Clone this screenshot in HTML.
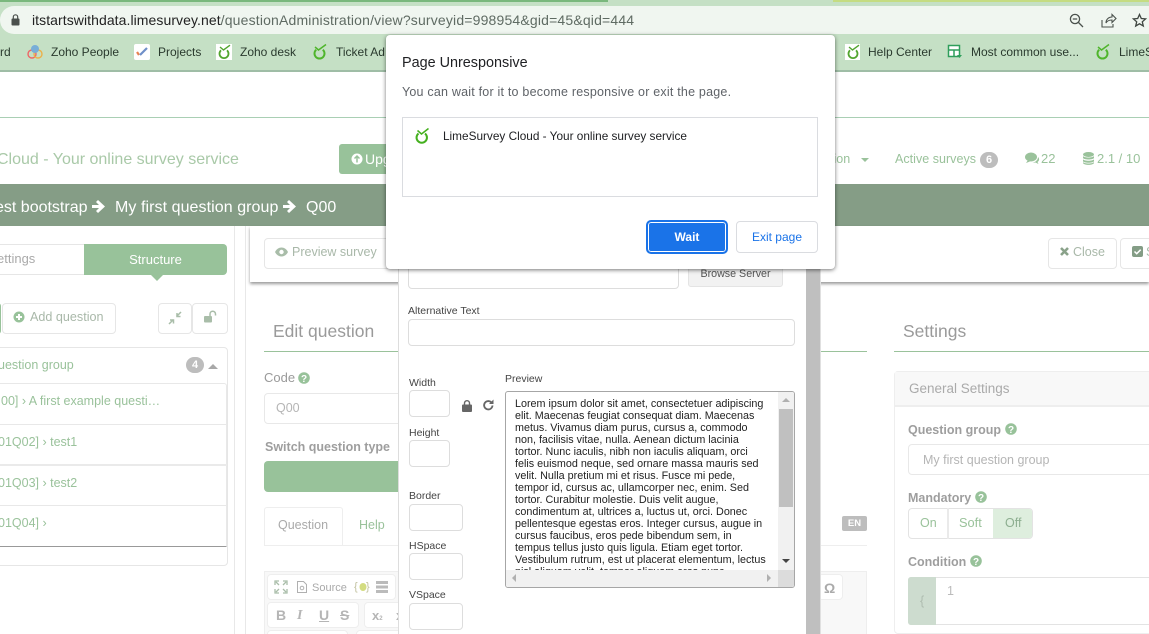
<!DOCTYPE html>
<html><head><meta charset="utf-8"><style>
html,body{margin:0;padding:0;width:1149px;height:634px;overflow:hidden;background:#fff}
body{position:relative;font-family:"Liberation Sans",sans-serif;color:#333}
.a{position:absolute;white-space:nowrap;box-sizing:border-box}
.bm{font-size:12px;color:#2a3a2e;top:44px;line-height:16px}
.g{color:#9ac29b}.gy{color:#a3a3a3}
.b{border:1px solid #e6e6e6;border-radius:4px;background:#fff}
.i{border:1px solid #ddd;border-radius:4px;background:#fff}
.l{font-size:10.5px;color:#444;line-height:13px}
svg{position:absolute;overflow:visible}
</style></head><body>
<!-- chrome -->
<div class="a" style="left:0;top:0;width:1149px;height:71px;background:#c5e0c5"></div>
<div class="a" style="left:0;top:0;width:608px;height:2px;background:#7ab87d"></div>
<div class="a" style="left:833px;top:0;width:316px;height:2px;background:#c5dc82"></div>
<div class="a" style="left:0;top:6px;width:1149px;height:28px;background:#f0f6f0;border-radius:14px 0 0 14px"></div>
<div class="a" style="left:0;top:70px;width:1149px;height:1.5px;background:#9fbda6"></div>
<svg style="left:11px;top:14px" width="11" height="13"><rect x="0.5" y="4.5" width="8" height="7" rx="1" fill="#4a504c"/><path d="M2.3 5V3a2.2 2.2 0 0 1 4.4 0v2" fill="none" stroke="#4a504c" stroke-width="1.2"/></svg>
<div class="a" style="left:32px;top:12px;font-size:14px;line-height:16px;color:#222;letter-spacing:.07px">itstartswithdata.limesurvey.net<span style="color:#5f6b63;letter-spacing:.17px">/questionAdministration/view?surveyid=998954&amp;gid=45&amp;qid=444</span></div>
<svg style="left:1069px;top:13px" width="16" height="16" fill="none" stroke="#4b524d" stroke-width="1.3"><circle cx="6" cy="6" r="4.6"/><path d="M9.5 9.5L14 14M3.8 6h4.4"/></svg>
<svg style="left:1101px;top:13px" width="16" height="16" fill="none" stroke="#4b524d" stroke-width="1.1"><path d="M1 7v7h11v-3M5 10c0-4 3-6 6-6V1.5l4 4-4 4V7c-3 0-5 1-6 3z"/></svg>
<svg style="left:1132px;top:13px" width="15" height="15" fill="none" stroke="#3f4641" stroke-width="1.3"><path d="M7.5 1.5l1.8 4 4.3.4-3.3 2.9 1 4.2-3.8-2.2-3.8 2.2 1-4.2L1.4 5.900l4.300-.4z"/></svg>
<!-- bookmarks -->
<div class="a bm" style="left:0">rd</div>
<svg style="left:27px;top:44px" width="16" height="16"><circle cx="5" cy="10" r="4" fill="none" stroke="#e66" stroke-width="1.4"/><circle cx="11" cy="10" r="4" fill="none" stroke="#ecb14a" stroke-width="1.4"/><circle cx="8" cy="5" r="4" fill="#78aed8"/></svg>
<div class="a bm" style="left:51px">Zoho People</div>
<div class="a" style="left:134px;top:44px;width:16px;height:16px;background:#fff;border-radius:2px"></div>
<svg style="left:134px;top:44px" width="16" height="16" fill="none" stroke-width="2.200"><path d="M3 8l2 3" stroke="#e8834f"/><path d="M6 11l7-7" stroke="#6f8fc8"/></svg>
<div class="a bm" style="left:158px">Projects</div>
<div class="a" style="left:216px;top:44px;width:16px;height:16px;background:#fff"></div>
<svg style="left:216px;top:44px" width="16" height="16" fill="none" stroke="#52a52f" stroke-width="1.800"><path d="M5 6.300a4.500 4.500 0 1 0 6 0"/><path d="M4 3l3.500 3L14 1.200" stroke-width="1.400"/></svg>
<div class="a bm" style="left:240px">Zoho desk</div>
<svg style="left:311px;top:44px" width="16" height="16" fill="none" stroke="#4fb52b" stroke-width="2"><path d="M5.200 5.800a5 5 0 1 0 6.600 0"/><path d="M4 3l3.500 3L15 .5" stroke-width="1.500"/></svg>
<div class="a bm" style="left:336px">Ticket Ad</div>
<div class="a" style="left:845px;top:44px;width:15px;height:16px;background:#fff"></div>
<svg style="left:845px;top:44px" width="16" height="16" fill="none" stroke="#52a52f" stroke-width="1.800"><path d="M5 6.300a4.500 4.500 0 1 0 6 0"/><path d="M4 3l3.500 3L14 1.200" stroke-width="1.400"/></svg>
<div class="a bm" style="left:868px">Help Center</div>
<svg style="left:947px;top:44px" width="16" height="16" fill="#fff" stroke="#2f9e5b" stroke-width="1.500"><rect x="1.500" y="1.500" width="11" height="11"/><path d="M1.500 6h11M7 6v6.500"/><path d="M10 11h5l-2.500 3z" fill="#2f9e5b" stroke="none"/></svg>
<div class="a bm" style="left:971px">Most common use...</div>
<svg style="left:1094px;top:44px" width="16" height="16" fill="none" stroke="#4fb52b" stroke-width="2"><path d="M5.200 5.800a5 5 0 1 0 6.600 0"/><path d="M4 3l3.500 3L15 .5" stroke-width="1.500"/></svg>
<div class="a bm" style="left:1119px">LimeS</div>

<!-- page header -->
<div class="a" style="left:0;top:117px;width:1149px;height:1px;background:#a9cfb4"></div>
<div class="a" style="left:-3px;top:150px;font-size:16px;line-height:20px;color:#a9c9a8">Cloud - Your online survey service</div>
<div class="a" style="left:339px;top:144px;width:60px;height:30px;background:#98c29a;border-radius:3px"></div>
<svg style="left:351px;top:153px" width="12" height="12"><circle cx="6" cy="6" r="5.500" fill="#fff"/><path d="M6 9.500V3M3.500 5.500L6 3l2.500 2.500" stroke="#98c29a" stroke-width="1.500" fill="none"/></svg>
<div class="a" style="left:365px;top:151px;font-size:14px;line-height:16px;color:#fff">Upg</div>
<div class="a g" style="left:830px;top:151px;font-size:12.500px;line-height:16px">tion</div>
<div class="a" style="left:861px;top:158px;border:4px solid transparent;border-top-color:#9ac29b;border-bottom:0"></div>
<div class="a g" style="left:895px;top:151px;font-size:12.500px;line-height:16px;letter-spacing:.03px">Active surveys</div>
<div class="a" style="left:980px;top:152px;width:18px;height:16px;border-radius:9px;background:#bdbdbd;color:#fff;font-size:11px;font-weight:bold;line-height:16px;text-align:center">6</div>
<svg style="left:1025px;top:152px" width="15" height="13" fill="#9ac29b"><ellipse cx="6" cy="5" rx="6" ry="4.500"/><path d="M3 8l-2 3 4-1.500zM13 5c2 2 1 4-.5 5l1 2-3-1.500-3 .2c3-.5 5.500-2.700 5.500-5.700z"/></svg>
<div class="a g" style="left:1041px;top:151px;font-size:13px;line-height:16px">22</div>
<svg style="left:1083px;top:152px" width="11" height="13" fill="#9ac29b"><ellipse cx="5.500" cy="2.500" rx="5.500" ry="2.500"/><path d="M0 4c1 2 10 2 11 0v2c-1 2-10 2-11 0zM0 7.200c1 2 10 2 11 0v2c-1 2-10 2-11 0zM0 10c1 2 10 2 11 0v1c-1 2.500-10 2.500-11 0z"/></svg>
<div class="a g" style="left:1097px;top:151px;font-size:13px;line-height:16px">2.1 / 10</div>
<!-- breadcrumb -->
<div class="a" style="left:0;top:184px;width:1149px;height:42px;background:#859d86"></div>
<div class="a" style="left:-5px;top:198px;font-size:16px;line-height:20px;color:#fff">est bootstrap</div>
<svg style="left:92px;top:200px" width="14" height="13" fill="#fff"><path d="M0 5h7L4 2l2-2 7 6.500L6 13l-2-2 3-3H0z"/></svg>
<div class="a" style="left:115px;top:198px;font-size:16px;line-height:20px;color:#fff;letter-spacing:.07px">My first question group</div>
<svg style="left:283px;top:200px" width="14" height="13" fill="#fff"><path d="M0 5h7L4 2l2-2 7 6.500L6 13l-2-2 3-3H0z"/></svg>
<div class="a" style="left:306px;top:198px;font-size:16px;line-height:20px;color:#fff">Q00</div>

<!-- left panel -->
<div class="a" style="left:-5px;top:244px;width:90px;height:31px;border:1px solid #e6e6e6;border-radius:4px 0 0 4px"></div>
<div class="a" style="left:-3px;top:251px;font-size:13px;line-height:16px;color:#aaa">ettings</div>
<div class="a" style="left:84px;top:244px;width:143px;height:31px;background:#98c29a;border-radius:0 4px 4px 0;color:#fff;font-size:13px;line-height:31px;text-align:center">Structure</div>
<div class="a" style="left:151px;top:275px;border:6px solid transparent;border-top-color:#98c29a;border-bottom:0"></div>
<div class="a" style="left:-5px;top:303px;width:6px;height:31px;border:1px solid #98c29a;border-radius:3px"></div>
<div class="a b" style="left:2px;top:303px;width:114px;height:31px"></div>
<svg style="left:13px;top:311px" width="12" height="12"><circle cx="6" cy="6" r="5.500" fill="#98c29a"/><path d="M6 3v6M3 6h6" stroke="#fff" stroke-width="2"/></svg>
<div class="a" style="left:30px;top:309px;font-size:12.600px;line-height:16px;color:#a9b8a9">Add question</div>
<div class="a b" style="left:158px;top:303px;width:34px;height:31px"></div>
<svg style="left:169px;top:312px" width="12" height="12" stroke="#a9bda9" stroke-width="1.500" fill="none"><path d="M12 0L7.500 4.500M8 1v3.500h3.500M0 12l4.500-4.500M1 8h3.500v3.500"/></svg>
<div class="a b" style="left:192px;top:303px;width:36px;height:31px"></div>
<svg style="left:204px;top:311px" width="13" height="12"><rect x="0" y="5" width="8" height="6.500" rx="1" fill="#a9bda9"/><path d="M6 5V3a2.500 2.500 0 0 1 5.500 0v1.500" fill="none" stroke="#a9bda9" stroke-width="1.500"/></svg>
<div class="a b" style="left:-5px;top:347px;width:233px;height:219px"></div>
<div class="a g" style="left:-2px;top:357px;font-size:12.500px;line-height:16px">uestion group</div>
<div class="a" style="left:186px;top:357px;width:18px;height:16px;border-radius:9px;background:#bdbdbd;color:#fff;font-size:11px;font-weight:bold;line-height:16px;text-align:center">4</div>
<div class="a" style="left:208px;top:364px;border:5px solid transparent;border-bottom-color:#a8a8a8;border-top:0"></div>
<div class="a" style="left:-5px;top:383px;width:232px;height:164px;border:1px solid #e8e8e8;border-bottom:1px solid #999;border-radius:3px 3px 0 0"></div>
<div class="a" style="left:0;top:424px;width:227px;height:1px;background:#e8e8e8"></div>
<div class="a" style="left:0;top:464px;width:227px;height:2px;background:#eaeaea"></div>
<div class="a" style="left:0;top:505px;width:227px;height:1px;background:#e8e8e8"></div>
<div class="a g" style="left:1px;top:393px;font-size:12.500px;line-height:16px">00] › A first example questi…</div>
<div class="a g" style="left:-2px;top:434px;font-size:12.500px;line-height:16px">01Q02] › test1</div>
<div class="a g" style="left:-2px;top:475px;font-size:12.500px;line-height:16px">01Q03] › test2</div>
<div class="a g" style="left:-2px;top:515px;font-size:12.500px;line-height:16px">01Q04] ›</div>
<div class="a" style="left:234px;top:226px;width:12px;height:408px;border-left:1px solid #e8e8e8;border-right:1px solid #e8e8e8"></div>

<!-- top bar -->
<div class="a" style="left:250px;top:226px;width:899px;height:56px;background:#fff;box-shadow:0 2px 3px rgba(0,0,0,.4)"></div>
<div class="a b" style="left:264px;top:238px;width:140px;height:31px"></div>
<svg style="left:275px;top:247px" width="13" height="10"><path d="M0 5c3-6 10-6 13 0-3 6-10 6-13 0z" fill="#a9bda9"/><circle cx="6.500" cy="5" r="2.200" fill="#fff"/></svg>
<div class="a" style="left:292px;top:244px;font-size:12.500px;line-height:16px;color:#a9b8a9">Preview survey</div>
<div class="a b" style="left:1048px;top:238px;width:69px;height:31px"></div>
<svg style="left:1060px;top:247px" width="9" height="9" stroke="#8aa28a" stroke-width="2.600"><path d="M1 1l7 7M8 1L1 8"/></svg>
<div class="a" style="left:1073px;top:244px;font-size:12.500px;line-height:16px;color:#a9b8a9">Close</div>
<div class="a b" style="left:1120px;top:238px;width:40px;height:31px"></div>
<svg style="left:1132px;top:246px" width="11" height="11"><rect width="11" height="11" rx="2" fill="#849d86"/><path d="M2.500 5.500l2.200 2.200 4-4" stroke="#fff" stroke-width="1.500" fill="none"/></svg>
<div class="a" style="left:1146px;top:244px;font-size:12.500px;line-height:16px;color:#a9b8a9">S</div>

<!-- edit question -->
<div class="a" style="left:273px;top:321px;font-size:17.500px;line-height:20px;color:#9a9a9a">Edit question</div>
<div class="a" style="left:264px;top:351px;width:603px;height:1px;background:#9ac29b"></div>
<div class="a" style="left:264px;top:370px;font-size:13px;line-height:16px;color:#9a9a9a">Code</div>
<svg style="left:298px;top:372px" width="12" height="12"><circle cx="6" cy="6" r="5.800" fill="#98c29a"/><text x="6" y="9.800" font-size="10" font-weight="bold" fill="#fff" text-anchor="middle" font-family="Liberation Sans">?</text></svg>
<div class="a i" style="left:264px;top:393px;width:140px;height:31px;border-color:#e8e8e8"></div>
<div class="a" style="left:276px;top:400px;font-size:12.500px;line-height:16px;color:#b5b5b5">Q00</div>
<div class="a" style="left:265px;top:439px;font-size:12.500px;font-weight:bold;line-height:16px;color:#9e9e9e">Switch question type</div>
<div class="a" style="left:264px;top:461px;width:140px;height:31px;background:#98c29a;border-radius:4px 0 0 4px"></div>
<div class="a" style="left:264px;top:507px;width:79px;height:39px;border:1px solid #eee;border-bottom:0;border-radius:3px 3px 0 0"></div>
<div class="a" style="left:264px;top:545px;width:603px;height:1px;background:#eee"></div>
<div class="a" style="left:278px;top:517px;font-size:12.500px;line-height:16px;color:#aaa">Question</div>
<div class="a g" style="left:359px;top:517px;font-size:12.500px;line-height:16px">Help</div>
<div class="a" style="left:842px;top:516px;width:25px;height:15px;background:#bdbdbd;border-radius:2px;color:#fff;font-size:9.500px;font-weight:bold;line-height:15px;text-align:center">EN</div>
<!-- editor -->
<div class="a" style="left:264px;top:571px;width:603px;height:63px;background:#f8f8f8;border:1px solid #eee;border-bottom:0"></div>
<div class="a b" style="left:267px;top:574px;width:129px;height:26px;border-color:#eee"></div>
<div class="a b" style="left:267px;top:602px;width:92px;height:26px;border-color:#eee"></div>
<div class="a b" style="left:364px;top:602px;width:40px;height:26px;border-color:#eee"></div>
<div class="a b" style="left:267px;top:630px;width:81px;height:10px;border-color:#eee"></div>
<div class="a b" style="left:356px;top:630px;width:48px;height:10px;border-color:#eee"></div>
<svg style="left:275px;top:581px" width="12" height="12" stroke="#a9bda9" stroke-width="1.300" fill="none"><path d="M0 4V0h4M8 0h4v4M0 8v4h4M12 8v4H8M1 1l3 3M11 1L8 4M1 11l3-3M11 11L8 8"/></svg>
<svg style="left:297px;top:581px" width="10" height="12" stroke="#b0b0b0" fill="none"><path d="M.5.500h6l3 3v8h-9z"/><circle cx="5" cy="7" r="1.800"/></svg>
<div class="a" style="left:312px;top:581px;font-size:11px;line-height:14px;color:#aaa">Source</div>
<div class="a" style="left:354px;top:580px;font-size:11px;line-height:14px;color:#c2c2a0">{</div>
<svg style="left:359px;top:582px" width="8" height="10"><ellipse cx="4" cy="5" rx="3.500" ry="4" fill="#d3dc80"/></svg>
<div class="a" style="left:366px;top:580px;font-size:11px;line-height:14px;color:#c2c2a0">}</div>
<svg style="left:376px;top:581px" width="12" height="12" fill="#bbb"><rect width="12" height="3"/><rect y="4.500" width="12" height="3"/><rect y="9" width="12" height="3"/></svg>
<div class="a" style="left:276px;top:608px;font-size:14px;font-weight:bold;line-height:15px;color:#b5b5b5">B</div>
<div class="a" style="left:297px;top:608px;font-size:14px;font-weight:bold;font-style:italic;line-height:15px;font-family:'Liberation Serif',serif;color:#b5b5b5">I</div>
<div class="a" style="left:319px;top:608px;font-size:14px;font-weight:bold;text-decoration:underline;line-height:15px;color:#b5b5b5">U</div>
<div class="a" style="left:340px;top:608px;font-size:14px;font-weight:bold;text-decoration:line-through;line-height:15px;color:#b5b5b5">S</div>
<div class="a" style="left:372px;top:608px;font-size:13px;font-weight:bold;line-height:15px;color:#b5b5b5">x<span style="font-size:6px">2</span></div>
<div class="a" style="left:396px;top:608px;font-size:13px;font-weight:bold;line-height:15px;color:#b5b5b5">x</div>
<div class="a b" style="left:818px;top:574px;width:25px;height:26px;border-color:#eee"></div>
<div class="a" style="left:824px;top:580px;font-size:14px;line-height:16px;color:#aaa;font-weight:bold">Ω</div>

<!-- settings -->
<div class="a" style="left:903px;top:321px;font-size:17.500px;line-height:20px;color:#9a9a9a">Settings</div>
<div class="a" style="left:894px;top:351px;width:255px;height:1px;background:#9ac29b"></div>
<div class="a" style="left:894px;top:371px;width:265px;height:263px;border:1px solid #eee;border-radius:4px"></div>
<div class="a" style="left:895px;top:372px;width:254px;height:35px;background:#f8f8f8;border-bottom:2px solid #eee"></div>
<div class="a" style="left:909px;top:381px;font-size:13.500px;line-height:16px;color:#aaa">General Settings</div>
<div class="a" style="left:908px;top:422px;font-size:12.500px;font-weight:bold;line-height:16px;color:#9e9e9e">Question group</div>
<svg style="left:1005px;top:423px" width="12" height="12"><circle cx="6" cy="6" r="5.800" fill="#98c29a"/><text x="6" y="9.800" font-size="10" font-weight="bold" fill="#fff" text-anchor="middle" font-family="Liberation Sans">?</text></svg>
<div class="a i" style="left:908px;top:444px;width:250px;height:31px;border-color:#e8e8e8"></div>
<div class="a" style="left:923px;top:452px;font-size:12.500px;line-height:16px;color:#b5b5b5">My first question group</div>
<div class="a" style="left:908px;top:490px;font-size:12.500px;font-weight:bold;line-height:16px;color:#9e9e9e">Mandatory</div>
<svg style="left:975px;top:491px" width="12" height="12"><circle cx="6" cy="6" r="5.800" fill="#98c29a"/><text x="6" y="9.800" font-size="10" font-weight="bold" fill="#fff" text-anchor="middle" font-family="Liberation Sans">?</text></svg>
<div class="a" style="left:908px;top:508px;width:125px;height:31px;border:1px solid #e3e3e3;border-radius:4px"></div>
<div class="a" style="left:947px;top:508px;width:2px;height:31px;background:#eaeaea"></div>
<div class="a" style="left:993px;top:509px;width:39px;height:29px;background:#deeede;border-radius:0 3px 3px 0"></div>
<div class="a g" style="left:920px;top:515px;font-size:12.500px;line-height:16px">On</div>
<div class="a g" style="left:959px;top:515px;font-size:12.800px;line-height:16px">Soft</div>
<div class="a" style="left:1005px;top:515px;font-size:12.500px;line-height:16px;color:#8dae90">Off</div>
<div class="a" style="left:908px;top:554px;font-size:12.500px;font-weight:bold;line-height:16px;color:#9e9e9e">Condition</div>
<svg style="left:970px;top:555px" width="12" height="12"><circle cx="6" cy="6" r="5.800" fill="#98c29a"/><text x="6" y="9.800" font-size="10" font-weight="bold" fill="#fff" text-anchor="middle" font-family="Liberation Sans">?</text></svg>
<div class="a" style="left:908px;top:577px;width:250px;height:48px;border:1px solid #e3e3e3;border-radius:3px"></div>
<div class="a" style="left:908px;top:577px;width:28px;height:48px;background:#cddccf;border-radius:3px 0 0 3px"></div>
<div class="a" style="left:920px;top:593px;font-size:12.500px;line-height:16px;color:#aebcaf">{</div>
<div class="a" style="left:947px;top:583px;font-size:12.500px;line-height:16px;color:#bbb">1</div>

<!-- image dialog behind -->
<div class="a" style="left:398px;top:255px;width:423px;height:379px;background:#fff;border-left:1px solid #ddd"></div>
<div class="a" style="left:806px;top:255px;width:15px;height:379px;background:#bfbfbf;border-right:1px solid #e0e0e0;outline:0"></div>
<div class="a i" style="left:408px;top:262px;width:271px;height:27px"></div>
<div class="a" style="left:688px;top:262px;width:95px;height:25px;background:#f2f2f2;border:1px solid #e4e4e4;border-radius:3px;font-size:10.700px;line-height:21px;text-align:center;color:#555;padding-top:1px">Browse Server</div>
<div class="a l" style="left:408px;top:305px">Alternative Text</div>
<div class="a i" style="left:408px;top:319px;width:387px;height:27px"></div>
<div class="a l" style="left:409px;top:377px">Width</div>
<div class="a i" style="left:409px;top:390px;width:41px;height:27px"></div>
<svg style="left:462px;top:400px" width="10" height="12"><rect y="4.500" width="10" height="7.500" rx="1" fill="#666"/><path d="M2.500 5V3.200a2.500 2.500 0 0 1 5 0V5" fill="none" stroke="#666" stroke-width="1.400"/></svg>
<svg style="left:483px;top:399px" width="11" height="12" fill="none" stroke="#666" stroke-width="1.800"><path d="M9.500 6.500a4.200 4.200 0 1 1-1.300-3.300"/><path d="M10.500 .5v4.500H6z" fill="#666" stroke="none"/></svg>
<div class="a l" style="left:409px;top:427px">Height</div>
<div class="a i" style="left:409px;top:440px;width:41px;height:27px"></div>
<div class="a l" style="left:409px;top:490px">Border</div>
<div class="a i" style="left:409px;top:504px;width:54px;height:27px"></div>
<div class="a l" style="left:409px;top:540px">HSpace</div>
<div class="a i" style="left:409px;top:553px;width:54px;height:27px"></div>
<div class="a l" style="left:409px;top:589px">VSpace</div>
<div class="a i" style="left:409px;top:603px;width:54px;height:27px"></div>
<div class="a l" style="left:505px;top:373px">Preview</div>
<div class="a" style="left:505px;top:391px;width:290px;height:197px;border:1px solid #a6a6a6;border-radius:3px;overflow:hidden;background:#fff">
<div class="a" style="left:9px;top:6px;font-size:10.770px;line-height:12px;color:#222;white-space:pre">Lorem ipsum dolor sit amet, consectetuer adipiscing
elit. Maecenas feugiat consequat diam. Maecenas
metus. Vivamus diam purus, cursus a, commodo
non, facilisis vitae, nulla. Aenean dictum lacinia
tortor. Nunc iaculis, nibh non iaculis aliquam, orci
felis euismod neque, sed ornare massa mauris sed
velit. Nulla pretium mi et risus. Fusce mi pede,
tempor id, cursus ac, ullamcorper nec, enim. Sed
tortor. Curabitur molestie. Duis velit augue,
condimentum at, ultrices a, luctus ut, orci. Donec
pellentesque egestas eros. Integer cursus, augue in
cursus faucibus, eros pede bibendum sem, in
tempus tellus justo quis ligula. Etiam eget tortor.
Vestibulum rutrum, est ut placerat elementum, lectus
nisl aliquam velit, tempor aliquam eros nunc</div>
<div class="a" style="left:272px;top:0;width:16px;height:195px;background:#f1f1f1"></div>
<div class="a" style="left:273px;top:17px;width:14px;height:98px;background:#c0c0c0"></div>
<div class="a" style="left:276px;top:6px;border:4px solid transparent;border-bottom-color:#b0b0b0;border-top:0"></div>
<div class="a" style="left:276px;top:167px;border:4px solid transparent;border-top-color:#444;border-bottom:0"></div>
<div class="a" style="left:0;top:178px;width:272px;height:17px;background:#f1f1f1"></div>
<div class="a" style="left:272px;top:178px;width:16px;height:17px;background:#dcdcdc"></div>
<div class="a" style="left:6px;top:182px;border:4px solid transparent;border-right-color:#b0b0b0;border-left:0"></div>
<div class="a" style="left:261px;top:182px;border:4px solid transparent;border-left-color:#b0b0b0;border-right:0"></div>
</div>

<!-- unresponsive dialog -->
<div class="a" style="left:386px;top:35px;width:449px;height:234px;background:#fff;border-radius:4px;box-shadow:0 1px 4px rgba(0,0,0,.55)"></div>
<div class="a" style="left:402px;top:54px;font-size:14.400px;line-height:18px;color:#202124">Page Unresponsive</div>
<div class="a" style="left:402px;top:84px;font-size:12.500px;line-height:16px;color:#5f6368;letter-spacing:.21px">You can wait for it to become responsive or exit the page.</div>
<div class="a" style="left:402px;top:117px;width:416px;height:80px;border:1px solid #dadce0"></div>
<svg style="left:415px;top:127px" width="16" height="18" fill="none" stroke="#45b01f" stroke-width="2"><path d="M3.500 6.500a5.200 5.200 0 1 0 6.500 0"/><path d="M2.500 3.500L6.500 7 13.500 1.500" stroke-width="1.500"/></svg>
<div class="a" style="left:443px;top:128px;font-size:11.800px;line-height:16px;color:#202124">LimeSurvey Cloud - Your online survey service</div>
<div class="a" style="left:646px;top:220px;width:82px;height:34px;background:#1a73e8;border:2px solid #1a73e8;border-radius:5px;box-shadow:inset 0 0 0 1px #fff;color:#fff;font-size:12px;font-weight:bold;line-height:30px;text-align:center">Wait</div>
<div class="a" style="left:736px;top:221px;width:82px;height:32px;background:#fff;border:1px solid #dadce0;border-radius:4px;color:#1a73e8;font-size:12px;line-height:30px;text-align:center">Exit page</div>
</body></html>
